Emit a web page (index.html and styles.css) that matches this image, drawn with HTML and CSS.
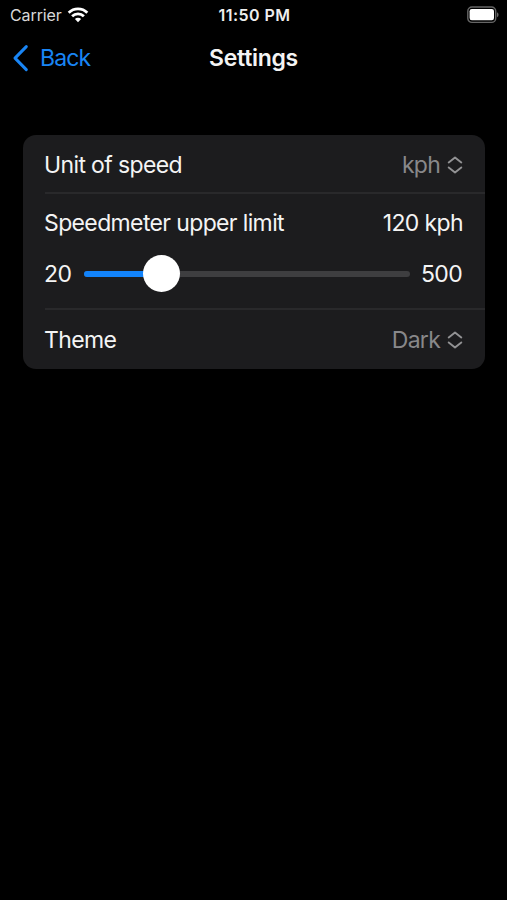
FILE: index.html
```html
<!DOCTYPE html>
<html lang="en">
	<head>
		<meta charset="utf-8">
		<title>Settings</title>

		<meta content="width=device-width, initial-scale=1" name="viewport">

		<link rel="stylesheet" href="styles.css">
	</head>
	<body>
		<div class="status-bar">
			<div class="carrier">
				<span class="carrier-name">Carrier</span>
				<svg class="wifi" width="22" height="16" viewBox="0 0 22 16">
					<path d="M1.7 5.8 A13.2 13.2 0 0 1 20.3 5.8" />
					<path d="M5.1 9.3 A8.4 8.4 0 0 1 16.9 9.3" />
					<path class="wifi-dot" d="M11 15.2 L7.9 12.1 A4.4 4.4 0 0 1 14.1 12.1 Z" />
				</svg>
			</div>
			<span class="time">11:50 PM</span>
			<div class="battery-side">
				<svg class="battery" width="33" height="18" viewBox="0 0 33 18">
					<rect class="battery-frame" x="1.8" y="1" width="27.9" height="15.4" rx="4.2" />
					<rect class="battery-level" x="3.6" y="3" width="24.4" height="11.2" rx="2.2" />
					<path class="battery-tip" d="M31 6.3 Q32.6 7 32.6 8.8 Q32.6 10.6 31 11.3 Z" />
				</svg>
			</div>
		</div>

		<div class="nav-bar">
			<a class="back" href="#">
				<svg width="17" height="28" viewBox="0 0 17 28">
					<path d="M14.3 2.6 L3 14.1 L14.3 25.6" />
				</svg>
				<span class="back-label">Back</span>
			</a>
			<h1 class="title">Settings</h1>
		</div>

		<div class="settings">
			<div class="row">
				<span class="label">Unit of speed</span>
				<span class="picker">
					<span class="value">kph</span>
					<svg width="16" height="18" viewBox="0 0 16 18">
						<path d="M1.7 6.4 L8 1.4 L14.3 6.4" />
						<path d="M1.7 11.4 L8 16.4 L14.3 11.4" />
					</svg>
				</span>
			</div>

			<div class="row limit-row">
				<div class="limit-head">
					<span class="label">Speedmeter upper limit</span>
					<span class="label limit-value">120 kph</span>
				</div>
				<div class="slider">
					<span class="label slider-min">20</span>
					<div class="track">
						<div class="track-fill" style="width: 77px"></div>
						<div class="thumb"></div>
					</div>
					<span class="label slider-max">500</span>
				</div>
			</div>

			<div class="row theme-row">
				<span class="label">Theme</span>
				<span class="picker">
					<span class="value">Dark</span>
					<svg width="16" height="18" viewBox="0 0 16 18">
						<path d="M1.7 6.4 L8 1.4 L14.3 6.4" />
						<path d="M1.7 11.4 L8 16.4 L14.3 11.4" />
					</svg>
				</span>
			</div>
		</div>
	</body>
</html>
```
FILE: styles.css
```css
* {
	box-sizing: border-box;
}

body {
	margin: 0;
	min-height: 100vh;
	background-color: #000;
	color: #f4f4f4;
	font-family: "Inter", "Liberation Sans", sans-serif;
	font-size: 23px;
	line-height: 28px;
	white-space: nowrap;
}

svg {
	display: block;
	fill: none;
	flex: none;
}

/* status bar */

.status-bar {
	display: grid;
	grid-template-columns: 1fr auto 1fr;
	align-items: center;
	height: 30px;
	padding: 0 8px 0 10px;
	font-size: 16px;
	line-height: 20px;
}

.carrier {
	display: flex;
	align-items: center;
	gap: 5px;
	color: #d8d8d8;
}

.carrier-name {
	width: 52px;
	letter-spacing: -0.1px;
}

.wifi {
	stroke: #fff;
	stroke-width: 2.8;
}

.wifi-dot {
	fill: #fff;
	stroke: none;
}

.time {
	font-weight: 600;
	letter-spacing: 0.45px;
	color: #eee;
}

.battery-side {
	display: flex;
	justify-content: flex-end;
}

.battery-frame {
	stroke: #666;
	stroke-width: 1.4;
}

.battery-level {
	fill: #fff;
}

.battery-tip {
	fill: #666;
}

/* navigation bar */

.nav-bar {
	display: grid;
	grid-template-columns: 1fr auto 1fr;
	align-items: center;
	height: 56px;
	padding: 0 12px;
}

.back {
	display: flex;
	align-items: center;
	gap: 11px;
	color: #1985f5;
	text-decoration: none;
	letter-spacing: -0.9px;
}

.back svg {
	stroke: #1985f5;
	stroke-width: 3;
	stroke-linecap: round;
	stroke-linejoin: round;
}

.title {
	margin: 0;
	font-size: 23px;
	font-weight: 600;
	letter-spacing: -0.3px;
}

/* settings list */

.settings {
	margin: 49px 22px 0 23px;
	height: 234px;
	background-color: #1c1c1e;
	border-radius: 13px;
}

.row {
	display: flex;
	align-items: center;
	justify-content: space-between;
	height: 59px;
	margin-left: 22px;
	padding: 2px 22px 0 0;
	border-bottom: 2px solid #29292b;
}

.limit-row {
	display: block;
	height: 116px;
	padding-top: 15px;
}

.theme-row {
	padding-top: 0;
	border-bottom: none;
}

.label {
	margin-left: -1px;
	letter-spacing: -0.63px;
}

.limit-head {
	display: flex;
	justify-content: space-between;
}

.slider {
	display: flex;
	align-items: center;
	height: 38px;
	margin-top: 18px;
}

.slider-min {
	width: 40px;
}

.slider-max {
	width: 42px;
}

.track {
	position: relative;
	flex: 1;
	height: 6px;
	margin-right: 12px;
	border-radius: 3px;
	background-color: #3e3e40;
}

.track-fill {
	height: 6px;
	border-radius: 3px;
	background-color: #1283fa;
}

.thumb {
	position: absolute;
	left: 59px;
	top: -16px;
	width: 37px;
	height: 37px;
	border-radius: 50%;
	background-color: #fff;
}

.picker {
	display: flex;
	align-items: center;
	gap: 7px;
	color: #88888a;
}

.value {
	letter-spacing: -0.75px;
}

.picker svg {
	stroke: #929294;
	stroke-width: 1.9;
	stroke-linecap: round;
	stroke-linejoin: round;
}
```
